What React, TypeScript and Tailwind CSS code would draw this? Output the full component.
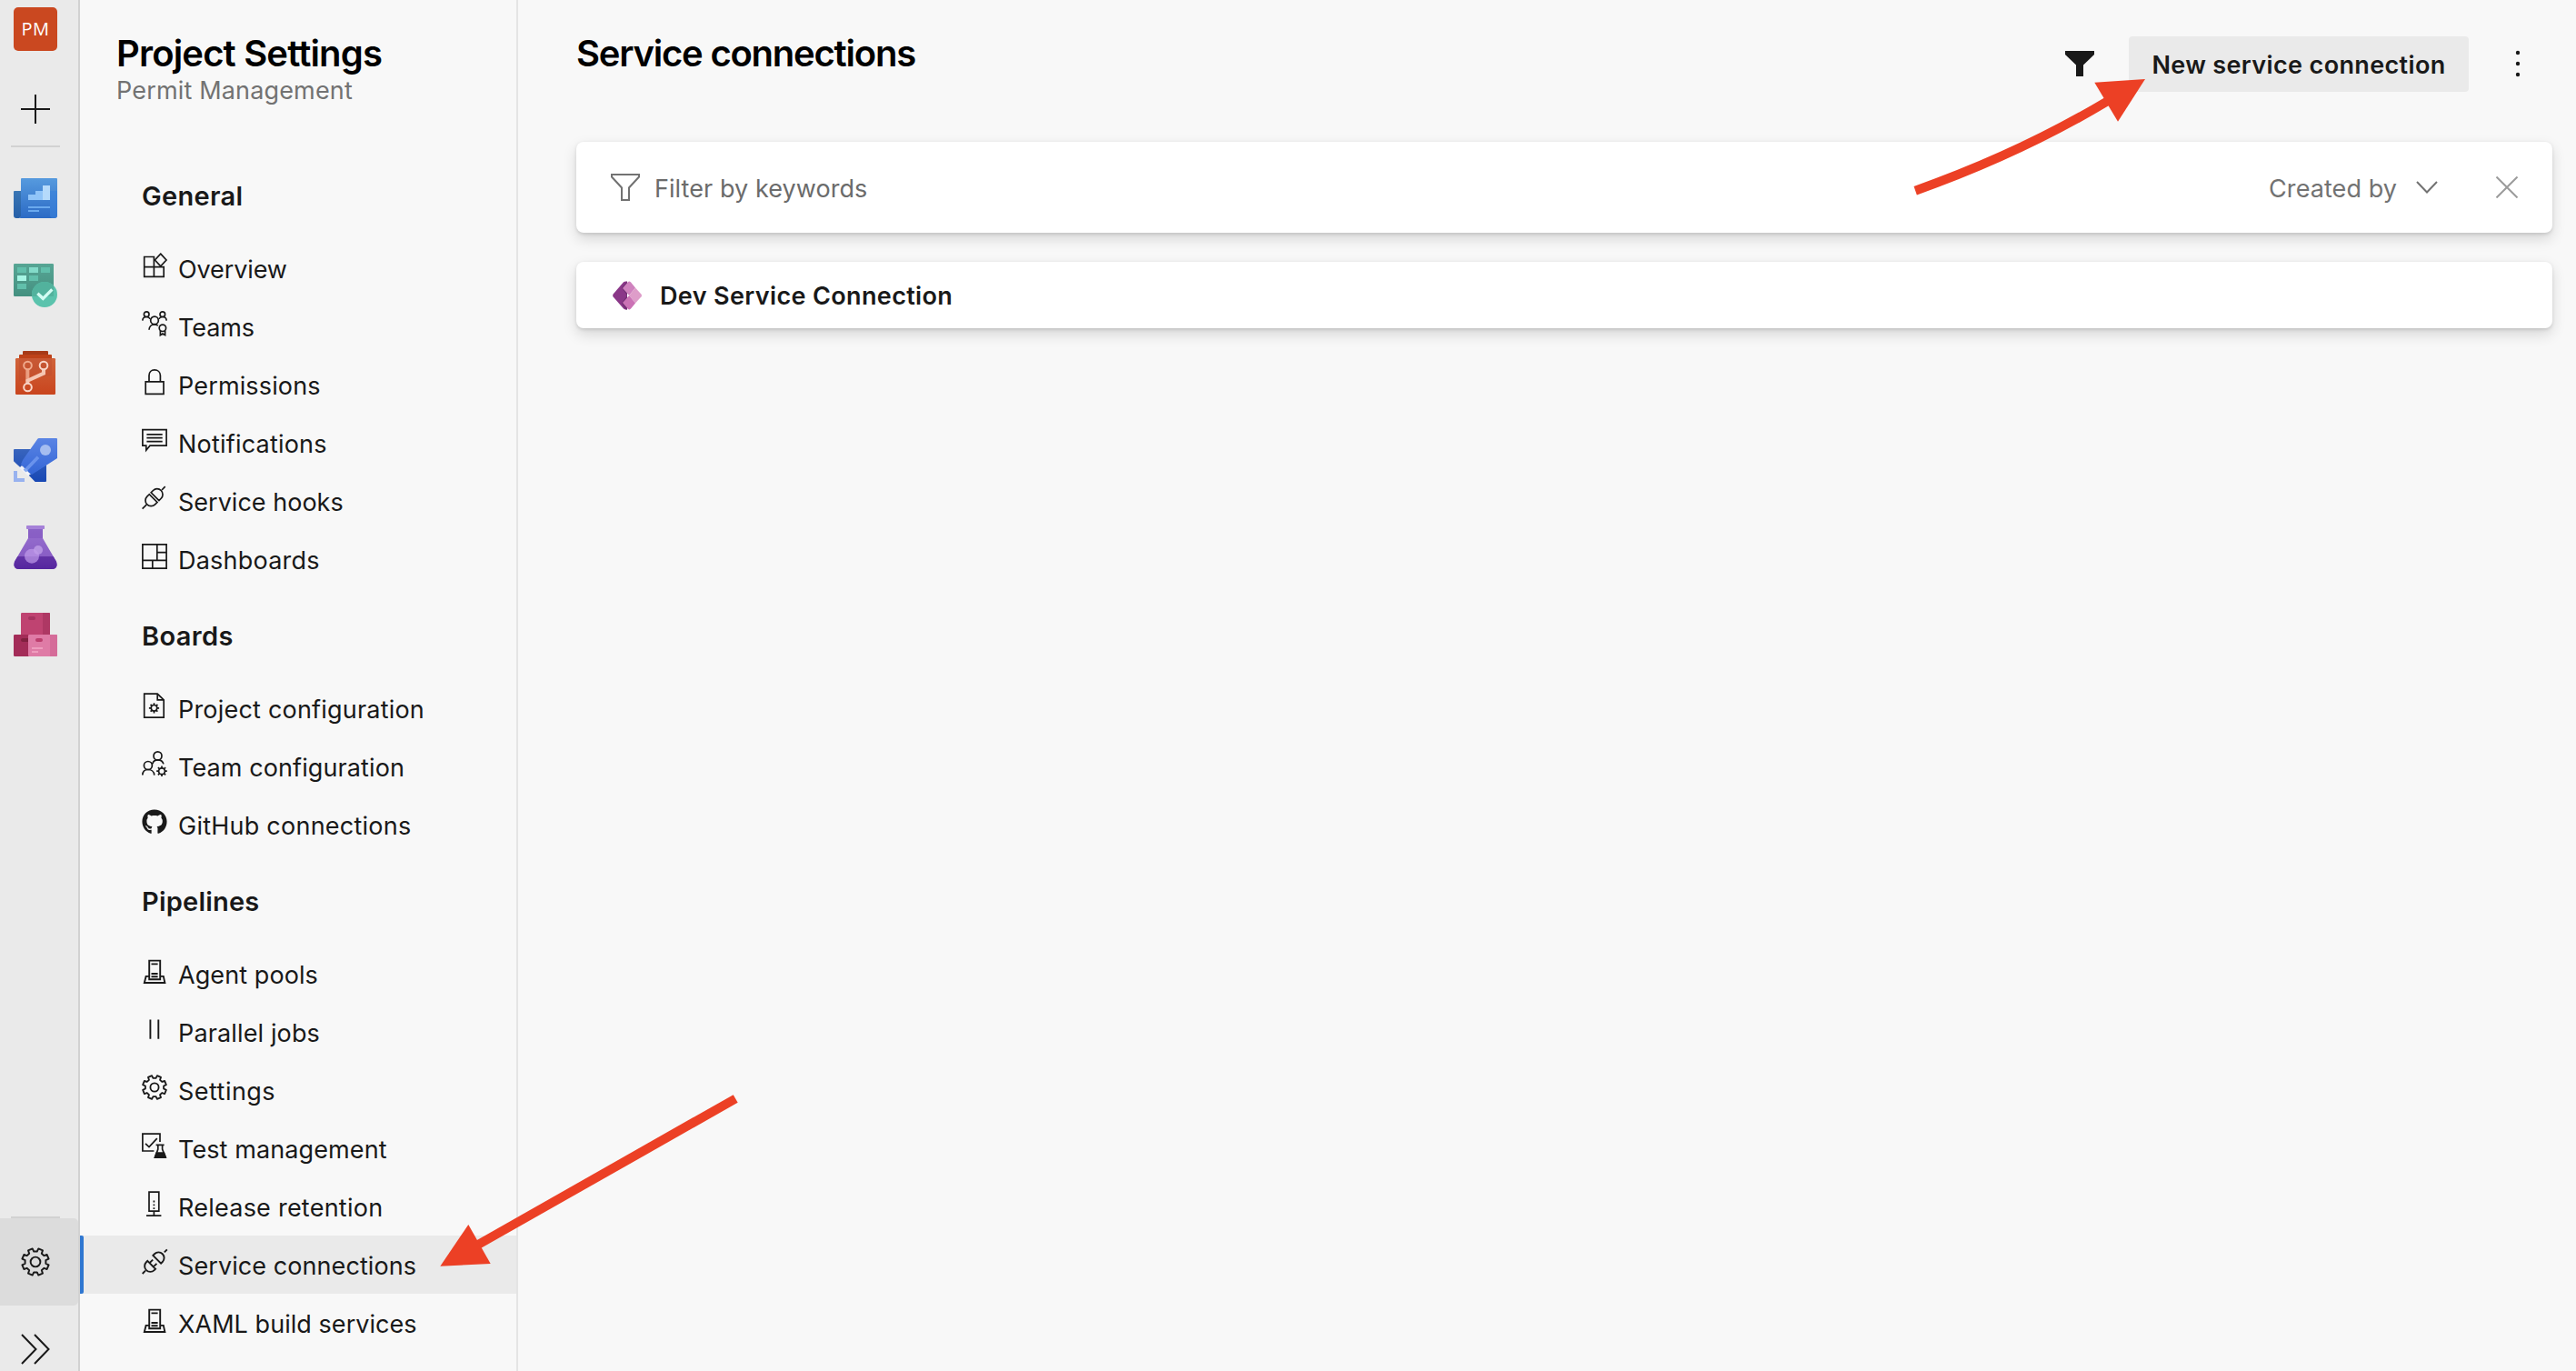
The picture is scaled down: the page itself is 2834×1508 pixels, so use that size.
import type { ReactNode } from "react";
import { FaGithub } from "react-icons/fa";

function gearPath(cx: number, cy: number, outer: number, inner: number) {
  const pts: string[] = [];
  for (let i = 0; i < 8; i++) {
    const mid = ((i * 45 + 22.5) * Math.PI) / 180;
    const steps: [number, number][] = [
      [-0.24, inner],
      [-0.17, outer],
      [0.17, outer],
      [0.24, inner],
    ];
    steps.forEach(([d, r]) => {
      pts.push(`${(cx + r * Math.cos(mid + d)).toFixed(2)} ${(cy + r * Math.sin(mid + d)).toFixed(2)}`);
    });
  }
  return `M${pts.join("L")}Z`;
}

function Line({ children, w = 1.7 }: { children: ReactNode; w?: number }) {
  return (
    <svg viewBox="0 0 28 28" className="size-7 shrink-0 overflow-visible" fill="none" stroke="#191919" strokeWidth={w}>
      {children}
    </svg>
  );
}

const OverviewIcon = () => (
  <Line>
    <path d="M2.7 4.5H13.4V26.4H2.7ZM2.7 15.6H24.2V26.4H13.4" />
    <path d="M20.7 1.2L27 8L20.7 14.8L14.4 8Z" />
  </Line>
);

const TeamsIcon = () => (
  <Line w={1.7}>
    <circle cx="5.2" cy="3.7" r="2.8" />
    <circle cx="22.8" cy="3.7" r="2.8" />
    <circle cx="14" cy="10.4" r="4.3" />
    <path d="M0.8 10.6C1 7.9 3 6.5 5.2 6.5C7 6.500 8.400 7.400 9.200 8.800M27.200 10.600C27 7.900 25 6.500 22.800 6.500C21 6.500 19.600 7.400 18.800 8.800M8 20.800C8 17.300 10.600 14.800 14 14.800C15.600 14.800 17 15.300 17.800 16.200" />
    <circle cx="22.9" cy="18.8" r="3.700" />
    <path d="M20.400 21.800V26.600L22.900 25L25.600 26.600V21.800" />
  </Line>
);

const LockIcon = () => (
  <Line>
    <path d="M4.2 13.8H24V27.3H4.2ZM8 13.8V7C8 3.2 10.5 0.9 14 0.9S20.4 3.2 20.4 7V13.8" />
  </Line>
);

const NotificationIcon = () => (
  <Line>
    <path d="M0.9 2.6H27.1V20.2H9L4.8 25.2V20.2H0.9ZM5.4 7.8H22.7M5.4 11.7H22.7M5.4 15.6H22.7" />
  </Line>
);

const HookIcon = () => (
  <Line w={1.7}>
    <path d="M0.6 25.6L5.2 21.200M25.7 1.2L22 5" />
    <g transform="rotate(-45 13.5 13.2)">
      <path d="M12.2 7H8.8A6.2 6.2 0 0 0 8.8 19.4H12.2ZM15 7H18.2A6.2 6.2 0 0 1 18.2 19.4H15Z" />
    </g>
  </Line>
);

const DashboardIcon = () => (
  <Line>
    <path d="M0.9 0.9H27.1V27.1H0.9ZM16.8 0.9V18.4M0.9 18.4H27.1M16.8 9.7H27.1M11.8 18.4V27.1" />
  </Line>
);

const ProjectConfigIcon = () => (
  <Line>
    <path d="M2.7 1.2H17.2L24.2 7.8V27.2H2.7ZM17.2 1.2V7.8H24.2" />
    <circle cx="13.5" cy="16.8" r="3.3" />
    <path d="M13.5 11.2V13.4M13.5 20.2V22.4M7.9 16.8H10.1M16.9 16.8H19.1M9.6 12.9L11 14.3M16 19.3L17.4 20.7M17.4 12.9L16 14.3M11 19.3L9.6 20.7" />
  </Line>
);

const TeamConfigIcon = () => (
  <Line>
    <circle cx="17.5" cy="5.4" r="4.5" />
    <circle cx="6.9" cy="16" r="4.5" />
    <path d="M11.8 14.2C12.4 11.6 14.4 9.9 17.5 9.9C20.8 9.9 23.2 11.6 23.9 14.4M0.8 26.6C0.9 22.6 3.4 20.5 6.9 20.5S13.6 22.6 13.8 26.6" />
    <circle cx="22" cy="22.2" r="3.4" />
    <path d="M22 16.4V18.8M22 25.6V28M16.2 22.2H18.6M25.4 22.2H27.8M17.9 18.1L19.6 19.8M24.4 24.6L26.1 26.3M26.1 18.1L24.4 19.8M19.6 24.6L17.9 26.3" />
  </Line>
);

const GithubIcon = () => <FaGithub className="size-7 shrink-0 text-[#191919]" />;

const ServerIcon = () => (
  <Line w={1.9}>
    <path d="M8.2 2.6H20.2V23.2H8.2ZM10.5 6.4H17.6M10.5 17H17.6M10.5 20.2H17.6M7.4 19.9H4.6L2.8 27H25.4L23.8 19.9H21" />
  </Line>
);

const ParallelIcon = () => (
  <Line w={1.9}>
    <path d="M9.4 3.6V24.8M18.3 3.6V24.8" />
  </Line>
);

const GearIcon = () => (
  <Line w={1.8}>
    <path d={gearPath(14, 14, 13.2, 10.2)} strokeLinejoin="round" />
    <circle cx="14" cy="14" r="4.6" />
  </Line>
);

const TestIcon = () => (
  <Line>
    <path d="M13.4 20H0.9V1.2H20V10M4 11.8L8 15.6L16.8 6.2M15.6 13.4H24.6M17.8 13.4V18L14.8 26.6H26L22.6 18V13.4" />
    <path d="M16.2 22H24.4L26.2 27.1H14.4Z" fill="#191919" />
  </Line>
);

const RetentionIcon = () => (
  <Line>
    <path d="M8 1.2H18.8V22.2H8ZM13.4 22.2V27.2M5 27.2H21.4" />
    <path d="M13.4 10.6V20" strokeDasharray="1.8 2" />
  </Line>
);

const PlugIcon = () => (
  <Line w={1.9}>
    <path d="M0.7 27L4 23.7M24.8 3.4L27.8 0.4" />
    <g transform="rotate(-45 14 14)">
      <path d="M9.3 7.8V20.2H7.4A6.2 6.2 0 0 1 7.4 7.8ZM9.3 11H14.4M9.3 17H14.4M17.8 7.8V20.2H20.2A6.2 6.2 0 0 0 20.2 7.8Z" />
    </g>
  </Line>
);

function RailSvg({ children }: { children: ReactNode }) {
  return (
    <div className="flex h-24 w-[86px] items-center pl-[15px]">
      <svg viewBox="0 0 144 144" className="size-12">
        {children}
      </svg>
    </div>
  );
}

function Grad({ id, from, to }: { id: string; from: string; to: string }) {
  return (
    <defs>
      <linearGradient id={id} x1="0" y1="0" x2="0" y2="1">
        <stop stopColor={from} />
        <stop offset="1" stopColor={to} />
      </linearGradient>
    </defs>
  );
}

function Rail() {
  return (
    <aside className="flex h-full w-[88px] shrink-0 flex-col border-r-2 border-[#d2d2d2] bg-[#eaeaea]">
      <div className="mt-2 ml-[15px] flex size-12 items-center justify-center rounded-[5px] bg-[#ca4820]">
        <span className="font-['Open_Sans'] text-[20px] leading-6 tracking-[0.4px] text-white">PM</span>
      </div>
      <svg viewBox="0 0 32 32" className="mt-12 ml-[23px] size-8" stroke="#191919" strokeWidth="2">
        <path d="M16 0V32M0 16H32" />
      </svg>
      <div className="mt-6 ml-3 h-0.5 w-[54px] bg-[#d2d2d2]" />
      <nav className="mt-2 flex flex-col">
        <RailSvg>
          <Grad id="ov" from="#569ade" to="#2b6ac5" />
          <Grad id="ovl" from="#3a76b4" to="#255fa8" />
          <path d="M0 51Q0 48 3 48H30V130L18 138H9Q0 138 0 129Z" fill="url(#ovl)" />
          <path d="M27 6H141Q144 6 144 9V129Q144 138 135 138H15Q24 138 24 129V9Q24 6 27 6Z" fill="url(#ov)" />
          <path d="M120 48H144V129Q144 138 132 138Q120 138 120 129Z" fill="#3a82dc" opacity=".6" />
          <path d="M48 60H72V48H96V78H48Z" fill="#90c4f8" />
          <path d="M96 30H120V78H96Z" fill="#b5dafb" />
          <path d="M48 99H120V105H48ZM48 111H84V117H48Z" fill="#6aa9ee" />
        </RailSvg>
        <RailSvg>
          <Grad id="bd" from="#57a594" to="#449080" />
          <rect width="132" height="108" rx="4" fill="url(#bd)" />
          <path d="M12 12H42V30H12ZM90 12H120V30H90ZM51 39H81V57H51ZM12 66H42V84H12Z" fill="#61bfab" />
          <path d="M51 12H81V30H51Z" fill="#83dbc9" />
          <path d="M12 39H42V57H12Z" fill="#a6f5e4" />
          <circle cx="102" cy="102" r="42" fill="#5bc3ad" />
          <path d="M102 60A42 42 0 0 0 60.4 108H132V72.5A42 42 0 0 0 102 60Z" fill="#52b29d" />
          <path d="M79 98L97 115L127 85" fill="none" stroke="#d3fcf3" strokeWidth="10" />
        </RailSvg>
        <RailSvg>
          <Grad id="rp" from="#d0633a" to="#c9451e" />
          <path d="M30 3Q30 0 33 0H111Q114 0 114 3V12H30Z" fill="#a73a18" />
          <path d="M18 15Q18 12 21 12H123Q126 12 126 15V26H18Z" fill="#be4219" />
          <rect x="6" y="24" width="132" height="120" rx="4" fill="url(#rp)" />
          <path d="M18 24H126V80L18 100Z" fill="#bb4a30" opacity=".4" />
          <g fill="none" strokeWidth="6">
            <path d="M46 62V100" stroke="#eb9d80" strokeWidth="12" />
            <path d="M99 62V74L46 98V108" stroke="#f5c5b2" strokeWidth="12" />
            <circle cx="46.5" cy="48" r="13" stroke="#efa98c" />
            <circle cx="99" cy="48" r="13" stroke="#f9d6c8" />
            <circle cx="46.5" cy="120" r="13" stroke="#f9d6c8" />
          </g>
        </RailSvg>
        <RailSvg>
          <Grad id="pl" from="#5a84e4" to="#3466d6" />
          <Grad id="plb" from="#3864bd" to="#1848b4" />
          <path d="M3 36H66L24 98L0 76V39Q0 36 3 36ZM108 88V141Q108 144 105 144H71L50 122Z" fill="url(#plb)" />
          <path d="M84 0H141Q144 0 144 3V66L60 120L50 114L24 86L30 72L78 4Q80 0 84 0Z" fill="url(#pl)" />
          <circle cx="105" cy="39" r="18" fill="#a5bdf0" />
          <path d="M81 62L37 108" stroke="#6a93ec" strokeWidth="11" />
          <path d="M19 98L26 91L33 98L30 103L40 113L46 109L54 118L48 124Z" fill="#f2f4fb" />
          <path d="M33 104L39 98L47 106L41 112Z" fill="#86a9f0" />
          <path d="M0 108H12V132H36V144H0Z" fill="#98b2ef" />
        </RailSvg>
        <RailSvg>
          <Grad id="fl" from="#9872d0" to="#8254c0" />
          <Grad id="flb" from="#6233a6" to="#55269f" />
          <path d="M48 6H96V42L141 119Q148 144 126 144H18Q-4 144 3 119L48 42Z" fill="url(#fl)" />
          <path d="M13 102H131L141 119Q148 144 126 144H18Q-4 144 3 119Z" fill="url(#flb)" />
          <rect x="42" width="60" height="12" rx="2" fill="#a581d8" />
          <path d="M48 12H96V42H48Z" fill="#8257bf" opacity=".6" />
          <circle cx="81" cy="81" r="15" fill="#c3a3ea" opacity=".75" />
          <circle cx="60" cy="101" r="24" fill="#c09be9" opacity=".7" />
        </RailSvg>
        <RailSvg>
          <rect x="24" width="96" height="76" rx="4" fill="#bf4371" />
          <path d="M96 0H116Q120 0 120 4V72H96Z" fill="#ae3864" />
          <rect x="48" y="12" width="24" height="12" rx="6" fill="#a63360" />
          <path d="M4 72H52V144H4Q0 144 0 140V76Q0 72 4 72Z" fill="#a32c58" />
          <path d="M30 84H48V96H30Q24 96 24 90Q24 84 30 84Z" fill="#80203f" />
          <rect x="48" y="72" width="96" height="72" rx="4" fill="#df7ba6" />
          <path d="M120 72H140Q144 72 144 76V140Q144 144 140 144H120Z" fill="#d56c99" />
          <rect x="72" y="84" width="24" height="12" rx="6" fill="#bc3e6d" />
          <path d="M60 114H96V120H60ZM60 126H81V132H60Z" fill="#ee9cbe" />
        </RailSvg>
      </nav>
      <div className="mt-auto ml-3 h-0.5 w-[54px] shrink-0 bg-[#d2d2d2]" />
      <div className="flex h-24 w-[86px] shrink-0 items-center rounded-r-[5px] bg-[#dcdcdc] pl-[23px]">
        <svg viewBox="0 0 28 28" className="size-8" fill="none" stroke="#191919" strokeWidth="1.7">
          <path d={gearPath(14, 14, 13.1, 10.1)} strokeLinejoin="round" />
          <circle cx="14" cy="14" r="4.7" />
        </svg>
      </div>
      <svg viewBox="0 0 32 34" className="mt-[31px] mb-[7px] ml-[23px] h-[34px] w-8 shrink-0" fill="none" stroke="#191919" strokeWidth="2">
        <path d="M1 1L16.5 17L1 33M15 1L30.5 17L15 33" />
      </svg>
    </aside>
  );
}

type Item = { label: string; Icon: () => ReactNode; track: string; active?: boolean };

const groups: { title: string; track: string; items: Item[] }[] = [
  {
    title: "General",
    track: "tracking-[0.29px]",
    items: [
      { label: "Overview", Icon: OverviewIcon, track: "tracking-[-0.11px]" },
      { label: "Teams", Icon: TeamsIcon, track: "tracking-[-0.08px]" },
      { label: "Permissions", Icon: LockIcon, track: "tracking-[0.15px]" },
      { label: "Notifications", Icon: NotificationIcon, track: "tracking-[0.2px]" },
      { label: "Service hooks", Icon: HookIcon, track: "tracking-[0.01px]" },
      { label: "Dashboards", Icon: DashboardIcon, track: "tracking-[0.22px]" },
    ],
  },
  {
    title: "Boards",
    track: "tracking-[0.35px]",
    items: [
      { label: "Project configuration", Icon: ProjectConfigIcon, track: "tracking-[0.2px]" },
      { label: "Team configuration", Icon: TeamConfigIcon, track: "tracking-[0.1px]" },
      { label: "GitHub connections", Icon: GithubIcon, track: "tracking-[0.24px]" },
    ],
  },
  {
    title: "Pipelines",
    track: "tracking-[0.22px]",
    items: [
      { label: "Agent pools", Icon: ServerIcon, track: "tracking-[0.08px]" },
      { label: "Parallel jobs", Icon: ParallelIcon, track: "tracking-[0.14px]" },
      { label: "Settings", Icon: GearIcon, track: "tracking-[0.46px]" },
      { label: "Test management", Icon: TestIcon, track: "tracking-[0.1px]" },
      { label: "Release retention", Icon: RetentionIcon, track: "tracking-[0.24px]" },
      { label: "Service connections", Icon: PlugIcon, track: "tracking-[0.08px]", active: true },
      { label: "XAML build services", Icon: ServerIcon, track: "tracking-[0.05px]" },
    ],
  },
];

function NavRow({ label, Icon, track, active }: Item) {
  return (
    <a className={active ? "flex h-16 items-start bg-[#eaeaea]" : "flex h-16 items-start"}>
      <span className={active ? "h-16 w-1 shrink-0 rounded-r-[2px] bg-[#2f77d1]" : "h-16 w-1 shrink-0"} />
      <span className="mt-[15px] ml-16 flex">
        <Icon />
      </span>
      <span className={`mt-0.5 ml-3 text-[27px] leading-[64px] whitespace-nowrap ${track}`}>{label}</span>
    </a>
  );
}

function SettingsNav() {
  return (
    <section className="flex h-full w-[482px] shrink-0 flex-col border-r-2 border-[#e4e4e4]">
      <header className="h-[163px] shrink-0 pt-[35px] pl-10">
        <h1 className="text-[40px] leading-[48px] font-semibold tracking-[-0.83px] text-black">Project Settings</h1>
        <p className="text-[27px] leading-[34px] tracking-[0.16px] text-[#727272]">Permit Management</p>
      </header>
      {groups.map((g) => (
        <div key={g.title} className="flex shrink-0 flex-col">
          <h2 className={`h-[100px] pt-[35px] pl-[68px] text-[29px] leading-9 font-semibold ${g.track}`}>{g.title}</h2>
          {g.items.map((it) => (
            <NavRow key={it.label} {...it} />
          ))}
        </div>
      ))}
    </section>
  );
}

const cardClass =
  "flex items-center rounded-[8px] bg-white shadow-[0_6.4px_14.4px_rgba(0,0,0,0.132),0_1.2px_3.6px_rgba(0,0,0,0.108)]";

function Main() {
  return (
    <main className="flex min-w-0 flex-1 flex-col pr-[26px] pl-16">
      <header className="flex h-[156px] shrink-0 items-start">
        <h1 className="pt-[35px] text-[40px] leading-[48px] font-semibold tracking-[-1.22px] text-black">Service connections</h1>
        <svg viewBox="0 0 32 28" className="mt-14 ml-auto h-7 w-8" fill="#191919">
          <path d="M0 0H32V4L20 15.5V28H12V15.5L0 4Z" />
        </svg>
        <button className="mt-10 ml-[38px] h-[61px] w-[374px] rounded-[4px] bg-[#eaeaea] pt-px text-[27px] leading-[61px] font-semibold tracking-[0.36px] whitespace-nowrap">
          New service connection
        </button>
        <svg viewBox="0 0 8 32" className="mt-[54px] mr-[34px] ml-[50px] h-8 w-2" fill="#191919">
          <circle cx="4" cy="4" r="2.2" />
          <circle cx="4" cy="16" r="2.2" />
          <circle cx="4" cy="28" r="2.2" />
        </svg>
      </header>
      <div className={`${cardClass} h-[100px] shrink-0 text-[27px] text-[#6b6b6b]`}>
        <svg viewBox="0 0 32 30" className="ml-[38px] h-[30px] w-8" fill="none" stroke="#727272" strokeWidth="2">
          <path d="M1 1H31V3.5L20 15.5V29H12V15.5L1 3.5Z" />
        </svg>
        <span className="ml-4 pt-[3px] leading-10 tracking-[0.07px]">Filter by keywords</span>
        <span className="ml-auto pt-[3px] leading-10 tracking-[0.07px] text-[#727272]">Created by</span>
        <svg viewBox="0 0 24 14" className="ml-[21px] h-3.5 w-6" fill="none" stroke="#727272" strokeWidth="2">
          <path d="M1 1L12 12.5L23 1" />
        </svg>
        <svg viewBox="0 0 24 24" className="mr-[38px] ml-16 size-6" fill="none" stroke="#9b9b9b" strokeWidth="2">
          <path d="M0.5 0.5L23.5 23.5M23.5 0.5L0.5 23.5" />
        </svg>
      </div>
      <div className={`${cardClass} mt-8 h-[73px] shrink-0`}>
        <svg viewBox="0 0 32 32" className="ml-10 size-8">
          <path d="M0.6 14.6L12 1.2Q13 0.4 14.6 0.4H16V31.6H14.6Q13 31.6 12 30.6L0.6 17.4Q-0.4 16 0.6 14.6Z" fill="#8a3788" />
          <path d="M10 7.500L16 0.400V31.600H14.600L10 24.500L16 16Z" fill="#702d72" />
          <path d="M11 8L17 0.9Q18.5 0 20 1.4L25 7.5L18.2 16Z" fill="#cf82be" />
          <path d="M25 7.5L31.6 14.8Q32.4 16 31.6 17.2L25 24.5L18.2 16Z" fill="#de9dc9" />
          <path d="M18.2 16L25 24.5L20 30.6Q18.5 32 17 31.1L11 24Z" fill="#cb72b5" />
        </svg>
        <span className="ml-5 pt-[3px] text-[27px] leading-10 font-semibold tracking-[0.36px]">Dev Service Connection</span>
      </div>
    </main>
  );
}

export default function App() {
  return (
    <div className="relative flex h-[1508px] w-[2834px] overflow-hidden bg-[#f8f8f8] font-[Inter,sans-serif] text-[#191919]">
      <Rail />
      <SettingsNav />
      <Main />
      <svg viewBox="0 0 2834 1508" className="pointer-events-none absolute inset-0 size-full" fill="#ec4025">
        <path d="M2107.2 209.7Q2222 169 2319 111" fill="none" stroke="#ec4025" strokeWidth="10" />
        <path d="M2360 87L2304.3 90.7L2330 133.7Z" />
        <path d="M809.2 1208.5L526 1369" fill="none" stroke="#ec4025" strokeWidth="10" />
        <path d="M484.3 1392.7L515.3 1347L539.7 1390Z" />
      </svg>
    </div>
  );
}
